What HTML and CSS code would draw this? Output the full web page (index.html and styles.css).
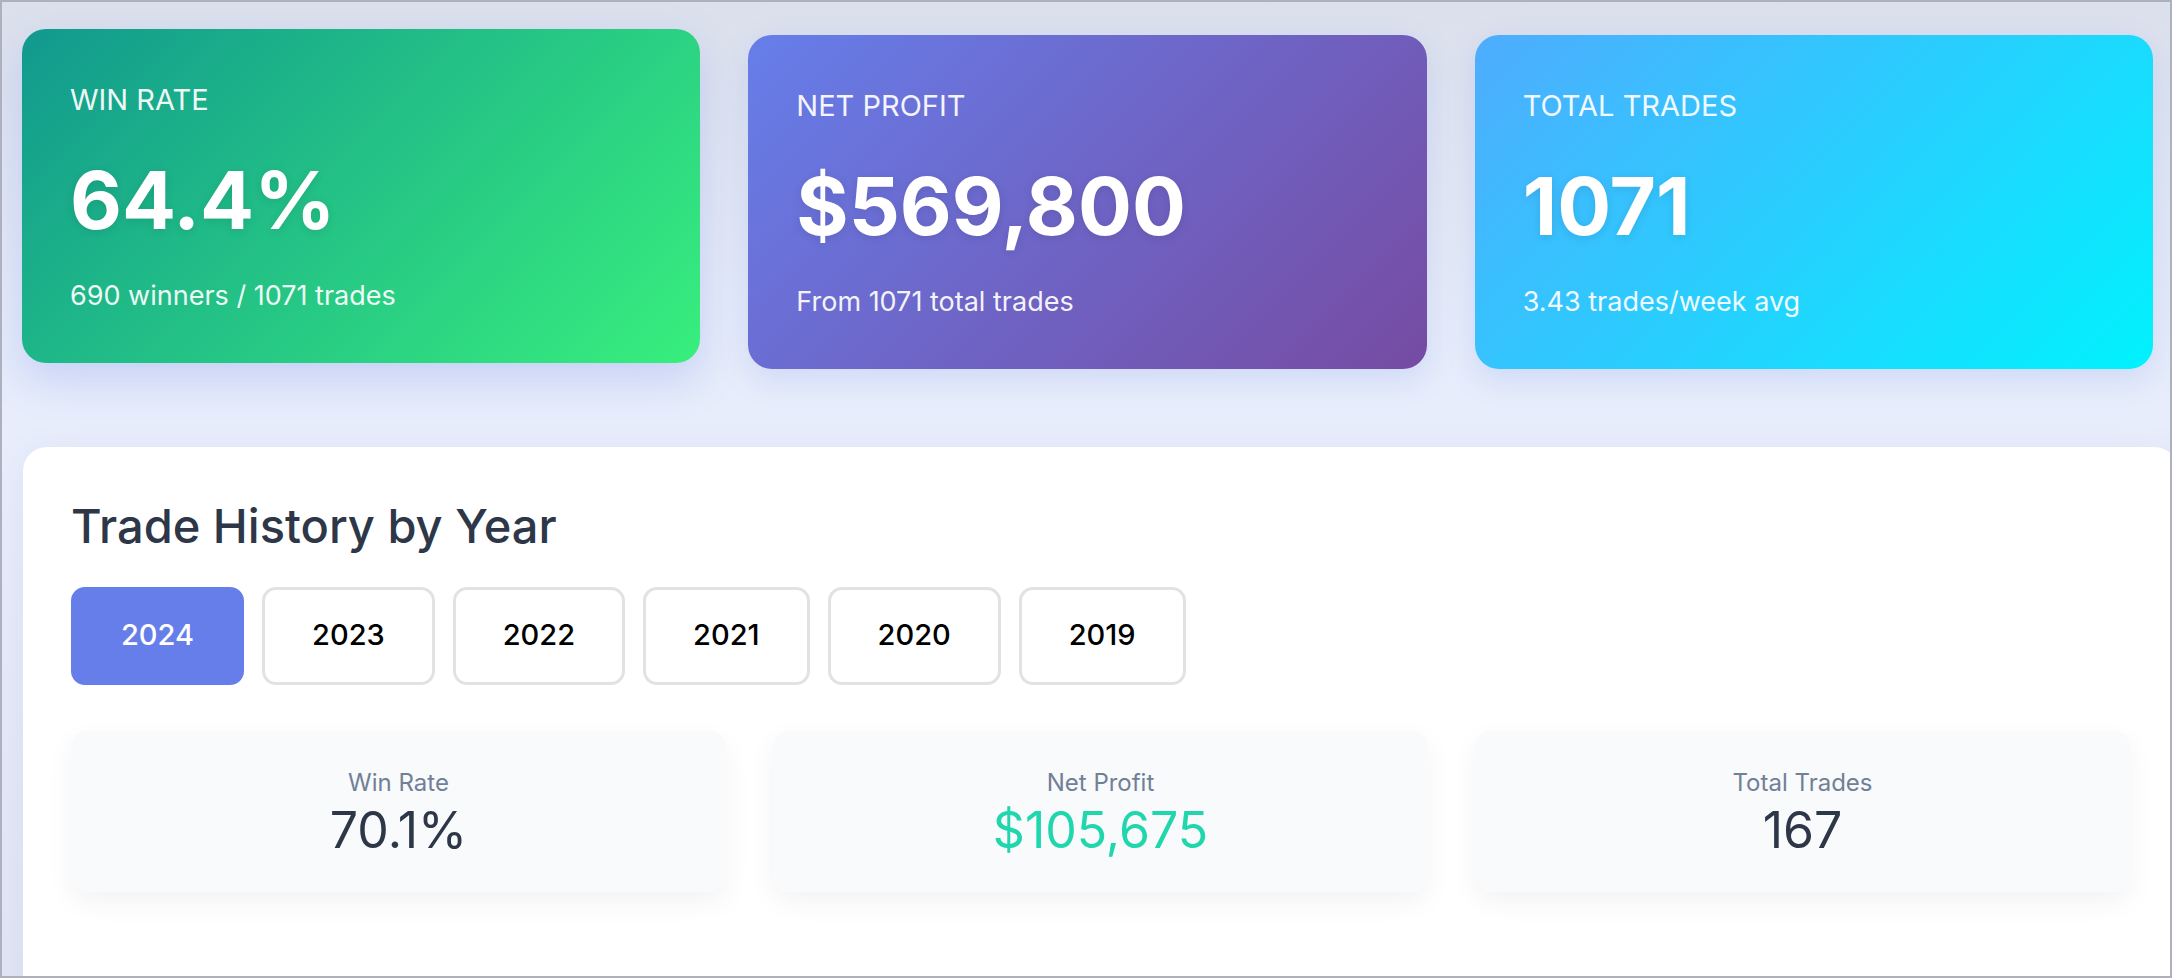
FILE: index.html
```html
<!DOCTYPE html>
<html lang="en">
<head>
<meta charset="UTF-8">
<meta name="viewport" content="width=device-width, initial-scale=1.0">
<title>Trading Dashboard</title>
<link rel="stylesheet" href="styles.css">
</head>
<body>
    <div class="frame">
        <div class="dashboard">
            <div class="summary">
                <div class="summary-card win lifted">
                    <div class="summary-label">WIN RATE</div>
                    <div class="summary-value">64.4%</div>
                    <div class="summary-sub">690 winners / 1071 trades</div>
                </div>
                <div class="summary-card profit">
                    <div class="summary-label">NET PROFIT</div>
                    <div class="summary-value">$569,800</div>
                    <div class="summary-sub">From 1071 total trades</div>
                </div>
                <div class="summary-card trades">
                    <div class="summary-label">TOTAL TRADES</div>
                    <div class="summary-value">1071</div>
                    <div class="summary-sub">3.43 trades/week avg</div>
                </div>
            </div>

            <section class="history">
                <h2>Trade History by Year</h2>
                <div class="year-tabs">
                    <button type="button" class="year-tab active">2024</button>
                    <button type="button" class="year-tab">2023</button>
                    <button type="button" class="year-tab">2022</button>
                    <button type="button" class="year-tab">2021</button>
                    <button type="button" class="year-tab">2020</button>
                    <button type="button" class="year-tab">2019</button>
                </div>
                <div class="year-stats">
                    <div class="year-stat">
                        <div class="year-stat-label">Win Rate</div>
                        <div class="year-stat-value">70.1%</div>
                    </div>
                    <div class="year-stat">
                        <div class="year-stat-label">Net Profit</div>
                        <div class="year-stat-value positive">$105,675</div>
                    </div>
                    <div class="year-stat">
                        <div class="year-stat-label">Total Trades</div>
                        <div class="year-stat-value">167</div>
                    </div>
                </div>
            </section>
        </div>
    </div>
</body>
</html>
```

FILE: styles.css
```css
html, body {
    margin: 0;
    height: 100%;
}
body {
    font-family: Inter, "Open Sans", sans-serif;
    overflow: hidden;
}
.frame {
    height: 978px;
    box-sizing: border-box;
    border: 2px solid #adb1bd;
    overflow: hidden;
    background: linear-gradient(180deg, #dbe0ec 0%, #e6ecfa 35%, #e8eefc 50%, #e2e7f6 100%);
}
.dashboard {
    width: 2156px;
    padding: 33px 0 0 20px;
}
.summary {
    display: grid;
    grid-template-columns: repeat(3, 1fr);
    gap: 48px;
    margin: 0 25px 78px 0;
}
.summary-card {
    padding: 54px 48px 50px;
    border-radius: 24px;
    color: white;
    box-shadow: 0 10px 30px rgba(102, 126, 234, 0.18);
}
.summary-card.lifted {
    transform: translateY(-6px);
    box-shadow: 0 16px 40px rgba(102, 126, 234, 0.25);
}
.win {
    background: linear-gradient(135deg, #11998e 0%, #38ef7d 100%);
}
.profit {
    background: linear-gradient(135deg, #667eea 0%, #764ba2 100%);
}
.trades {
    background: linear-gradient(135deg, #4facfe 0%, #00f2fe 100%);
}
.summary-label {
    font-size: 29px;
    line-height: 1.2;
    opacity: 0.92;
    margin-bottom: 31px;
}
.summary-value {
    font-size: 80px;
    font-weight: 700;
    line-height: 101px;
    margin-bottom: 29px;
    text-shadow: 0 2px 10px rgba(0, 0, 0, 0.1);
}
.summary-sub {
    font-size: 27px;
    line-height: 1.25;
    opacity: 0.92;
}
.history {
    margin-left: 1px;
    min-height: 700px;
    padding: 51px 48px 48px;
    background: white;
    border-radius: 24px;
    box-shadow: 0 10px 40px rgba(60, 70, 120, 0.08);
}
.history h2 {
    margin: 0 0 33px;
    font-size: 47px;
    font-weight: 500;
    line-height: 1.2;
    color: #2d3748;
}
.year-tabs {
    display: flex;
    gap: 18px;
    margin-bottom: 46px;
}
.year-tab {
    padding: 28px 47px 29px;
    border: 3px solid #e2e2e2;
    border-radius: 14px;
    background: white;
    color: #000;
    font-family: inherit;
    font-size: 29px;
    font-weight: 500;
    line-height: 1.2;
    cursor: pointer;
}
.year-tab.active {
    background: #667eea;
    border-color: #667eea;
    color: white;
}
.year-stats {
    display: grid;
    grid-template-columns: repeat(3, 1fr);
    gap: 47px;
}
.year-stat {
    padding: 38px 20px 32px;
    border-radius: 16px;
    background: #f8fafc;
    text-align: center;
    box-shadow: 0 10px 28px rgba(0, 0, 0, 0.05);
}
.year-stat-label {
    font-size: 24px;
    line-height: 1.2;
    color: #718096;
    margin-bottom: 2px;
}
.year-stat-value {
    font-size: 50px;
    line-height: 1.2;
    color: #2d3748;
}
.year-stat-value.positive {
    color: #1fd6ad;
}
```
